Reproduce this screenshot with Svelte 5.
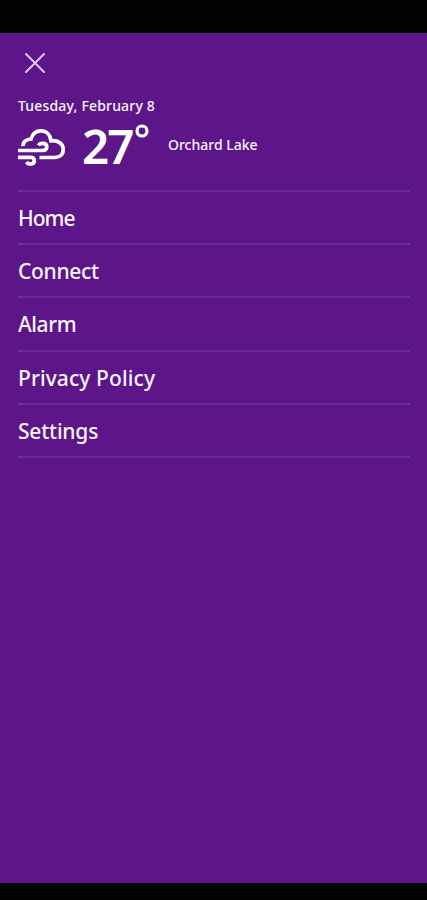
<script lang="ts">
  const date = 'Tuesday, February 8';
  const temperature = 27;
  const city = 'Orchard Lake';

  const items = [
    { label: 'Home', spacing: -1 },
    { label: 'Connect', spacing: -0.3 },
    { label: 'Alarm', spacing: -0.4 },
    { label: 'Privacy Policy', spacing: 0.1 },
    { label: 'Settings', spacing: -0.2 }
  ];
</script>

<div class="screen">
  <div class="drawer">
    <button class="close" aria-label="Close menu">
      <svg width="20" height="20" viewBox="0 0 20 20">
        <path d="M1 1 19 19M19 1 1 19" />
      </svg>
    </button>

    <div class="date"><span>{date}</span></div>

    <div class="weather">
      <svg class="cloud" width="48" height="40" viewBox="0 0 48 40">
        <path d="M5 18.2C4.8 14 8 11.2 13 11C14.5 5.6 18 2.8 22.8 2.8C28.5 2.8 32.4 6.8 33 12.8C40 12 45.2 15.6 45.2 21.4C45.2 26.8 41.5 29.5 36.5 29.5H21.5" />
        <path d="M0 22.5H24C27.2 22.5 28.8 20.8 28.8 18.8C28.8 16.6 27 15.4 24.7 15.4C22.8 15.4 21.2 16 20.4 17.4" />
        <path d="M0 29.4H12.5C15 29.4 16.3 30.8 16.3 32.7C16.3 34.8 14.8 36 12.7 36C10.8 36 9.4 35.2 8.7 33.8" />
      </svg>
      <span class="temperature">{temperature}</span>
      <svg class="degree" width="14" height="14" viewBox="0 0 14 14">
        <circle cx="7" cy="7" r="5" />
      </svg>
      <span class="city">{city}</span>
    </div>

    <nav>
      {#each items as item}
        <a href="#menu"><span style="letter-spacing: {item.spacing}px">{item.label}</span></a>
      {/each}
    </nav>
  </div>
</div>

<style>
  :global(body) {
    margin: 0;
    background: #000;
  }

  .screen {
    box-sizing: border-box;
    width: 427px;
    height: 900px;
    padding: 33px 0 17px;
    background: #000;
    font-family: 'Noto Sans', sans-serif;
    font-weight: 500;
    color: #fbf5ff;
  }

  .drawer {
    box-sizing: border-box;
    height: 850px;
    padding: 20px 17px 0 18px;
    background: #5c1689;
  }

  .close {
    display: block;
    width: 20px;
    height: 20px;
    margin-left: 7px;
    padding: 0;
    border: 0;
    background: none;
  }

  svg {
    display: block;
    flex: none;
    fill: none;
    stroke: #fff;
  }

  .close svg {
    stroke: #e6cdf3;
    stroke-width: 1.8;
    stroke-linecap: round;
  }

  .date {
    height: 20px;
    margin-top: 23px;
    line-height: 20px;
    font-size: 14px;
    letter-spacing: 0.18px;
    white-space: nowrap;
  }

  .weather {
    display: flex;
    align-items: flex-start;
    height: 74px;
  }

  .cloud {
    margin-top: 12px;
    stroke-width: 3.7;
  }

  .temperature {
    width: 52px;
    margin-left: 16px;
    margin-top: 6px;
    line-height: 48px;
    font-size: 47.5px;
    font-weight: 600;
    letter-spacing: -2px;
    color: #fff;
  }

  .degree {
    margin-left: 1px;
    margin-top: 8px;
    stroke-width: 3.2;
  }

  .city {
    margin-left: 19px;
    margin-top: 19px;
    line-height: 20px;
    font-size: 14px;
    white-space: nowrap;
  }

  nav {
    border-top: 2px solid #6b2e92;
  }

  nav a {
    display: block;
    box-sizing: border-box;
    height: 53.2px;
    border-bottom: 2px solid #6b2e92;
    line-height: 52px;
    font-size: 21px;
    color: inherit;
    text-decoration: none;
  }
</style>
